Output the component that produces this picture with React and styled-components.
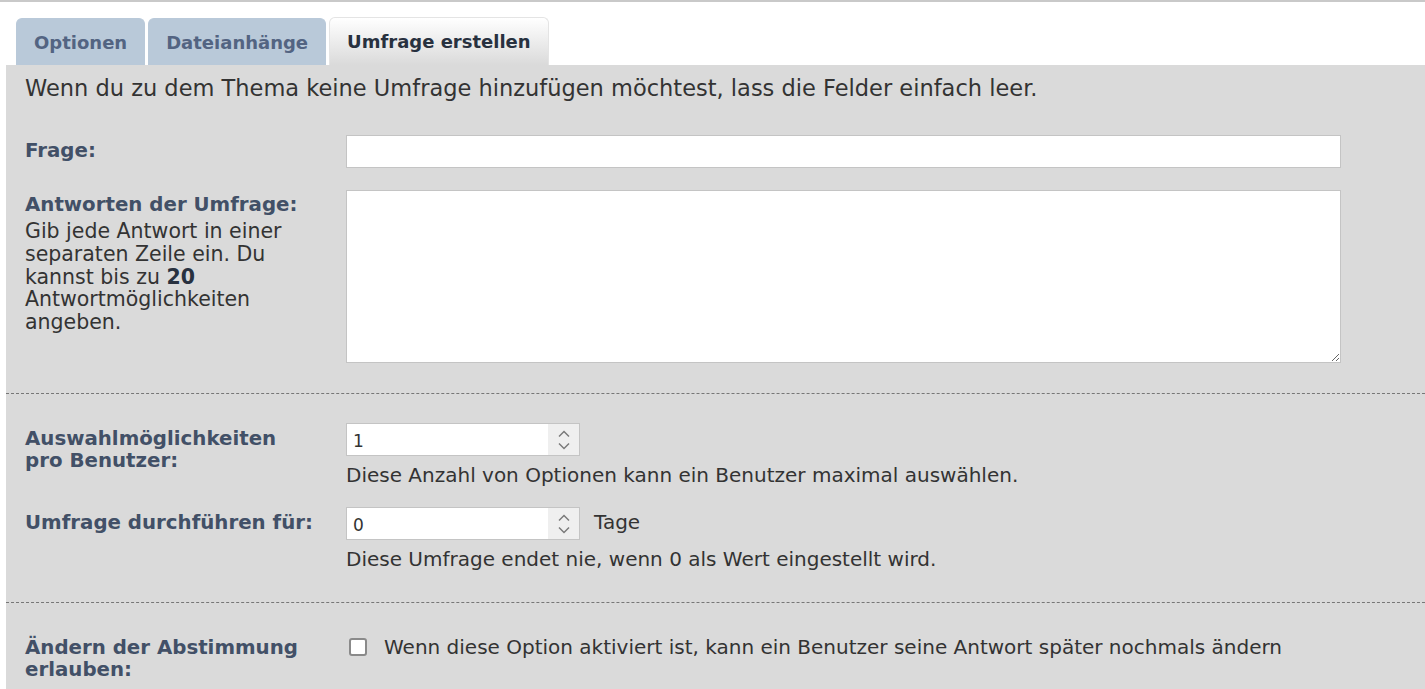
import React from "react";
import styled, { createGlobalStyle } from "styled-components";

const GlobalStyle = createGlobalStyle`
  html, body {
    margin: 0;
    padding: 0;
    background: #fff;
    overflow: hidden;
  }
  body {
    font-family: "DejaVu Sans", Verdana, sans-serif;
    color: #333;
  }
`;

const tabs = [
  { id: "options", label: "Optionen" },
  { id: "attach", label: "Dateianhänge" },
  { id: "poll", label: "Umfrage erstellen" },
];

const Spinner = () => (
  <SpinBox>
    <svg width="16" height="28" viewBox="0 0 16 28" fill="none">
      <path d="M3 10.5 8 5.5l5 5" stroke="#7a7a7a" strokeWidth="1.5" />
      <path d="M3 17.5 8 22.5l5-5" stroke="#7a7a7a" strokeWidth="1.5" />
    </svg>
  </SpinBox>
);

const NumberField = ({ value }) => (
  <NumberWrap>
    <NumberInput type="text" defaultValue={value} />
    <Spinner />
  </NumberWrap>
);

const App = () => {
  return (
    <Page>
      <GlobalStyle />
      <TabBar>
        {tabs.map((t) => (
          <Tab key={t.id} $active={t.id === "poll"}>
            {t.label}
          </Tab>
        ))}
      </TabBar>
      <Panel>
        <Intro>
          Wenn du zu dem Thema keine Umfrage hinzufügen möchtest, lass die
          Felder einfach leer.
        </Intro>

        <Row>
          <Label>Frage:</Label>
          <TextInput type="text" />
        </Row>
        <Row $top={22}>
          <LabelBlock>
            <Label>Antworten der Umfrage:</Label>
            <Help>
              Gib jede Antwort in einer separaten Zeile ein. Du kannst bis zu{" "}
              <strong>20</strong> Antwortmöglichkeiten angeben.
            </Help>
          </LabelBlock>
          <TextArea />
        </Row>

        <Divider />

        <Row>
          <Label>
            Auswahlmöglichkeiten
            <br />
            pro Benutzer:
          </Label>
          <Field>
            <NumberField value="1" />
            <Explain>
              Diese Anzahl von Optionen kann ein Benutzer maximal auswählen.
            </Explain>
          </Field>
        </Row>
        <Row $top={20}>
          <Label>Umfrage durchführen für:</Label>
          <Field>
            <Inline>
              <NumberField value="0" />
              <Unit>Tage</Unit>
            </Inline>
            <Explain>
              Diese Umfrage endet nie, wenn 0 als Wert eingestellt wird.
            </Explain>
          </Field>
        </Row>

        <Divider $after={29} $before={31} />

        <Row>
          <Label>
            Ändern der Abstimmung
            <br />
            erlauben:
          </Label>
          <CheckLine>
            <Check type="checkbox" />
            <span>
              Wenn diese Option aktiviert ist, kann ein Benutzer seine Antwort
              später nochmals ändern
            </span>
          </CheckLine>
        </Row>
      </Panel>
    </Page>
  );
};

const Page = styled.div`
  border-top: 2px solid #c9c9c9;
  padding: 15px 0 0 6px;
  min-height: 689px;
  box-sizing: border-box;
  display: flex;
  flex-direction: column;
`;

const TabBar = styled.div`
  display: flex;
  align-items: flex-end;
  gap: 3px;
  padding-left: 10px;
`;

const Tab = styled.div`
  height: ${(p) => (p.$active ? "48px" : "47px")};
  box-sizing: border-box;
  padding: 0 17px;
  display: flex;
  align-items: center;
  font-size: 18px;
  font-weight: bold;
  border-radius: 6px 6px 0 0;
  color: ${(p) => (p.$active ? "#28313f" : "#536482")};
  background: ${(p) =>
    p.$active ? "linear-gradient(#ffffff, #dadada)" : "#b9c9d9"};
  border: 1px solid ${(p) => (p.$active ? "#e4e4e4" : "#b9c9d9")};
  border-bottom: none;
`;

const Panel = styled.div`
  flex: 1;
  background: #dadada;
  padding: 10px 0 20px 19px;
`;

const Intro = styled.p`
  margin: 0 0 34px;
  font-size: 22.5px;
  line-height: 26px;
  color: #333;
`;

const Row = styled.div`
  display: grid;
  grid-template-columns: 321px 995px;
  align-items: start;
  margin-top: ${(p) => p.$top || 0}px;
`;

const LabelBlock = styled.div`
  padding: 4px 20px 0 0;
`;

const Label = styled.div`
  font-size: 19.8px;
  line-height: 22px;
  font-weight: bold;
  color: #425067;
  padding-top: 5px;

  ${LabelBlock} & {
    padding-top: 0;
  }
`;

const Help = styled.div`
  font-size: 20.5px;
  line-height: 22.8px;
  margin-top: 4px;
  color: #333;

  strong {
    color: #28313f;
  }
`;

const TextInput = styled.input`
  width: 995px;
  height: 33px;
  box-sizing: border-box;
  border: 1px solid #c4c4c4;
  background: #fff;
  font: inherit;
  outline: none;
  margin: 0;
`;

const TextArea = styled.textarea`
  width: 995px;
  height: 173px;
  box-sizing: border-box;
  border: 1px solid #c4c4c4;
  background: #fff;
  font: inherit;
  outline: none;
  margin: 0;
  resize: both;
`;

const Divider = styled.hr`
  border: none;
  border-top: 1px dashed #777;
  margin: ${(p) => p.$before || 30}px 0 ${(p) => p.$after || 29}px -19px;
  height: 0;
`;

const Field = styled.div`
  display: flex;
  flex-direction: column;
`;

const Inline = styled.div`
  display: flex;
  align-items: center;
  gap: 14px;
`;

const NumberWrap = styled.div`
  width: 234px;
  height: 33px;
  box-sizing: border-box;
  border: 1px solid #c4c4c4;
  background: #fff;
  display: flex;
`;

const NumberInput = styled.input`
  flex: 1;
  min-width: 0;
  border: none;
  outline: none;
  background: transparent;
  font-family: "DejaVu Sans", Verdana, sans-serif;
  font-size: 17px;
  color: #333;
  padding: 3px 0 0 6px;
`;

const SpinBox = styled.div`
  width: 31px;
  background: #efefef;
  display: flex;
  align-items: center;
  justify-content: center;
`;

const Unit = styled.span`
  font-size: 20px;
  color: #333;
  margin-top: -3px;
`;

const Explain = styled.div`
  font-size: 20px;
  line-height: 23px;
  color: #333;
  margin-top: 8px;
`;

const CheckLine = styled.label`
  display: flex;
  align-items: center;
  gap: 17px;
  font-size: 20px;
  line-height: 22px;
  color: #333;
  padding: 4px 0 0 3px;
`;

const Check = styled.input`
  appearance: none;
  width: 18px;
  height: 18px;
  margin: 0;
  border: 2px solid #8a8a8a;
  border-radius: 3px;
  background: #fff;
  box-sizing: border-box;
  flex: none;
`;

export default App;
